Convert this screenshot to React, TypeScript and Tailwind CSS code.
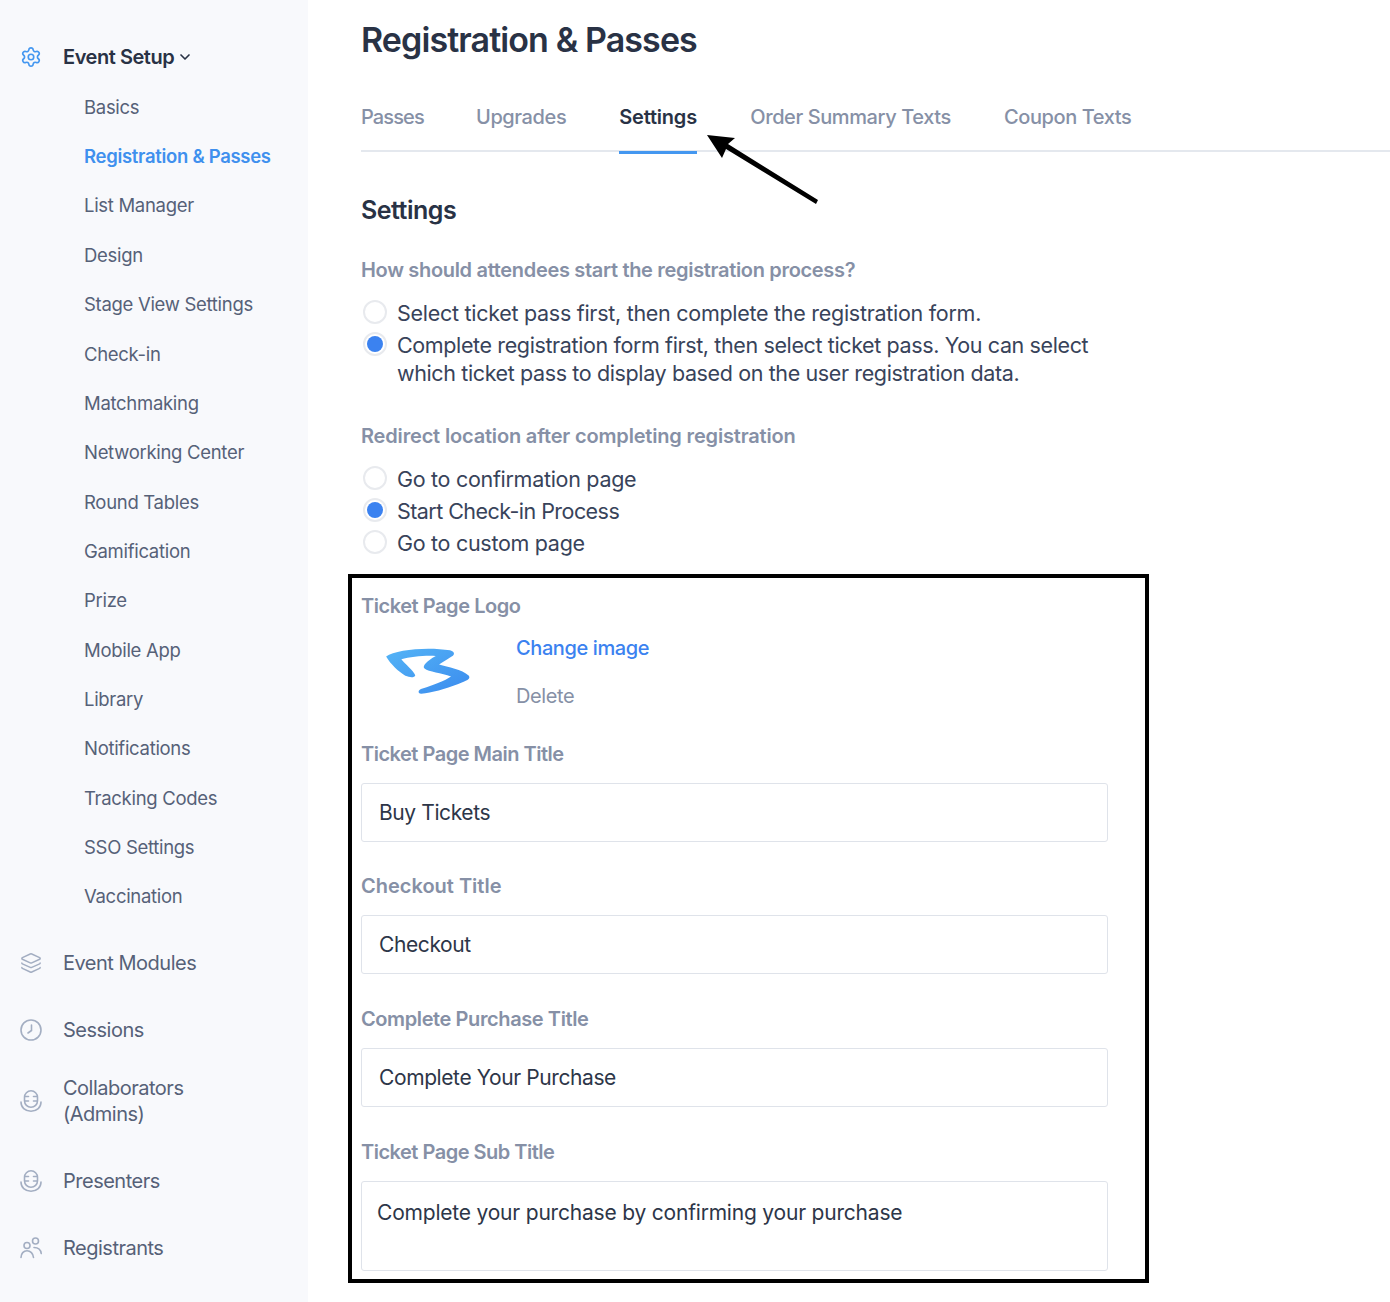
import { ChevronDown, Layers, Settings } from "lucide-react";

const subItems = [
  "Basics",
  "Registration & Passes",
  "List Manager",
  "Design",
  "Stage View Settings",
  "Check-in",
  "Matchmaking",
  "Networking Center",
  "Round Tables",
  "Gamification",
  "Prize",
  "Mobile App",
  "Library",
  "Notifications",
  "Tracking Codes",
  "SSO Settings",
  "Vaccination",
];

function MicIcon() {
  return (
    <svg width="22" height="22" viewBox="0 0 22 22" fill="none" stroke="#a3aec2" strokeWidth="1.6" strokeLinecap="round">
      <rect x="4.5" y="0.8" width="13" height="16.5" rx="6.5" />
      <path d="M5 6.5h3.5M5 11h3.5M13.5 6.5H17M13.5 11H17" />
      <path d="M1 12c0 5.5 4 9.2 10 9.2S21 17.5 21 12" />
    </svg>
  );
}

function ClockIcon() {
  return (
    <svg width="22" height="22" viewBox="0 0 22 22" fill="none" stroke="#a3aec2" strokeWidth="1.6" strokeLinecap="round">
      <circle cx="11" cy="11" r="10" />
      <path d="M11.5 6v5.5L8 14" />
    </svg>
  );
}

function UsersIcon() {
  return (
    <svg width="22" height="22" viewBox="0 0 22 22" fill="none" stroke="#a3aec2" strokeWidth="1.6" strokeLinecap="round">
      <circle cx="7" cy="8.5" r="3" />
      <circle cx="15.5" cy="4" r="3" />
      <path d="M1 20.5c0-4 2.6-6.8 6-6.8s6.200 2.800 6.500 6.800" />
      <path d="M14 10.500c4 0 6.800 2.500 7.200 6" />
    </svg>
  );
}

function Radio({ checked }: { checked?: boolean }) {
  return (
    <span className="mt-[1px] flex h-6 w-6 shrink-0 items-center justify-center rounded-full border-2 border-[#e8eaee] bg-white">
      {checked && <span className="h-4 w-4 rounded-full bg-[#3b82f0]" />}
    </span>
  );
}

function Label({ children, className = "tracking-[-0.45px]" }: { children: React.ReactNode; className?: string }) {
  return <div className={`text-[20px] leading-7 font-semibold text-[#8690a6] ${className}`}>{children}</div>;
}

function Field({ value }: { value: string }) {
  return (
    <div className="mt-[15px] flex h-[59px] w-[747px] items-center rounded-[3px] border border-[#dfe3ea] px-[17px] text-[21px] tracking-[-0.4px] text-[#2d3648]">
      {value}
    </div>
  );
}

export default function App() {
  return (
    <div className="flex h-[1302px] w-[1390px] overflow-hidden bg-white font-['Inter',sans-serif]">
      {/* Sidebar */}
      <aside className="w-[308px] shrink-0 bg-[#f8f9fc] pl-5 pt-[43px]">
        <div className="flex h-[27px] items-center">
          <Settings size={22} strokeWidth={1.8} className="text-[#4497f0]" />
          <span className="ml-[21px] text-[20px] font-semibold tracking-[-0.45px] text-[#293245]">Event Setup</span>
          <ChevronDown size={16} strokeWidth={2.5} className="ml-[3px] text-[#293245]" />
        </div>

        <div className="mt-[13px] pl-16">
          {subItems.map((item) => (
            <div
              key={item}
              className={[
                "flex h-[49.35px] items-center text-[18.5px] tracking-[-0.3px]",
                item === "Registration & Passes" ? "font-semibold text-[#3f90ee]" : "text-[#566178]",
              ].join(" ")}
            >
              {item}
            </div>
          ))}
        </div>

        <div className="mt-[25px] flex flex-col text-[20px] tracking-[-0.5px] text-[#566178]">
          <div className="flex h-[33px] items-center gap-[21px]"><Layers size={22} strokeWidth={1.6} className="text-[#a3aec2]" />Event Modules</div>
          <div className="mt-[34px] flex h-[33px] items-center gap-[21px]"><ClockIcon />Sessions</div>
          <div className="mt-[27px] flex h-[54px] items-center gap-[21px]"><MicIcon /><span className="leading-[26px]">Collaborators<br />(Admins)</span></div>
          <div className="mt-[37px] flex h-[33px] items-center gap-[21px]"><MicIcon />Presenters</div>
          <div className="mt-[34px] flex h-[33px] items-center gap-[21px]"><UsersIcon />Registrants</div>
        </div>
      </aside>

      {/* Contenido */}
      <main className="relative min-w-0 flex-1 pl-[53px] pt-[18px]">
        <h1 className="text-[34px] leading-[44px] font-semibold tracking-[-0.9px] text-[#293245]">Registration &amp; Passes</h1>

        <div className="mt-[26px] flex h-[64px] gap-[53px] border-b-2 border-[#e4e8ee] text-[20px] font-medium tracking-[-0.4px] text-[#8690a6]">
          <div className="w-[62px] pt-[14px] tracking-[-0.9px] whitespace-nowrap">Passes</div>
          <div className="pt-[14px]">Upgrades</div>
          <div className="-mb-[2px] h-[66px] w-[78px] border-b-[3px] border-[#4497f0] pt-[14px] font-semibold tracking-[-0.2px] text-[#293245]">Settings</div>
          <div className="pt-[14px]">Order Summary Texts</div>
          <div className="pt-[14px]">Coupon Texts</div>
        </div>

        <svg className="absolute left-[398px] top-[130px]" width="116" height="76" viewBox="0 0 116 76">
          <path d="M1 5 L29 8 L22 14 L112 70 L110 74 L20 19 L16 28 Z" fill="#000" />
        </svg>

        <h2 className="mt-[42px] text-[25px] leading-8 font-semibold tracking-[-0.5px] text-[#293245]">Settings</h2>

        <Label className="mt-[30px] tracking-[-0.32px]">How should attendees start the registration process?</Label>
        <div className="mt-[15px] w-[760px] text-[21.5px] leading-7 text-[#38435a]">
          <div className="flex gap-[10px] pl-[2px] tracking-[-0.28px]"><Radio /><span>Select ticket pass first, then complete the registration form.</span></div>
          <div className="mt-1 flex gap-[10px] pl-[2px] tracking-[-0.38px]"><Radio checked /><span>Complete registration form first, then select ticket pass. You can select which ticket pass to display based on the user registration data.</span></div>
        </div>

        <Label className="mt-[35px] tracking-[-0.17px]">Redirect location after completing registration</Label>
        <div className="mt-[15px] text-[21.5px] leading-7 tracking-[-0.3px] text-[#38435a]">
          <div className="flex gap-[10px] pl-[2px]"><Radio /><span>Go to confirmation page</span></div>
          <div className="mt-1 flex gap-[10px] pl-[2px]"><Radio checked /><span className="tracking-[-0.55px]">Start Check-in Process</span></div>
          <div className="mt-1 flex gap-[10px] pl-[2px]"><Radio /><span>Go to custom page</span></div>
        </div>

        {/* Recuadro negro */}
        <div className="-ml-[13px] mt-[17px] h-[709px] w-[801px] border-[4px] border-black pl-[9px] pt-[14px]">
          <Label>Ticket Page Logo</Label>
          <div className="mt-[14px] flex h-[96px]">
            <svg className="ml-[24px] mt-[12px]" width="87" height="49" viewBox="120 230 260 148">
              <defs>
                <linearGradient id="logoGrad" x1="0" y1="0" x2="1" y2="1">
                  <stop offset="0" stopColor="#54b4f6" />
                  <stop offset="1" stopColor="#3b8bee" />
                </linearGradient>
              </defs>
              <path
                d="M122 262 C150 240 250 232 315 243 C332 248 330 258 315 265 C305 272 292 280 282 286 C310 295 350 300 372 320 C378 330 365 335 340 345 C300 360 260 372 228 374 C216 372 218 362 232 358 C265 348 300 335 318 322 C290 312 250 308 238 298 C230 290 245 275 272 260 C240 258 195 262 168 270 C180 285 205 305 210 318 C208 326 195 326 180 320 C160 308 135 285 122 262 Z"
                fill="url(#logoGrad)"
              />
            </svg>
            <div className="ml-[44px] flex flex-col text-[20px] tracking-[-0.4px]">
              <span className="font-medium leading-7 text-[#3b82f0]">Change image</span>
              <span className="mt-5 leading-7 text-[#8690a6]">Delete</span>
            </div>
          </div>

          <Label className="mt-[10px] tracking-[-0.5px]">Ticket Page Main Title</Label>
          <Field value="Buy Tickets" />
          <Label className="mt-[30px]">Checkout Title</Label>
          <Field value="Checkout" />
          <Label className="mt-[31px] tracking-[-0.4px]">Complete Purchase Title</Label>
          <Field value="Complete Your Purchase" />
          <Label className="mt-[31px] tracking-[-0.5px]">Ticket Page Sub Title</Label>
          <div className="mt-[15px] h-[90px] w-[747px] rounded-[3px] border border-[#dfe3ea] px-[15px] pt-[17px] text-[21px] leading-7 tracking-[-0.2px] text-[#2d3648]">
            Complete your purchase by confirming your purchase
          </div>
        </div>
      </main>
    </div>
  );
}
